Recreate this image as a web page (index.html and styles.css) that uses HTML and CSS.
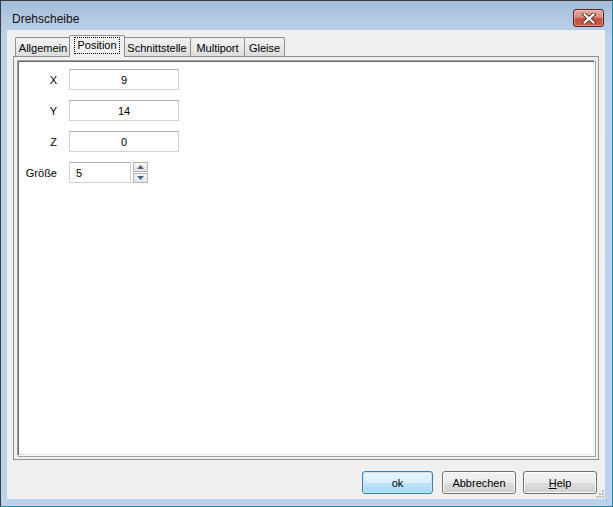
FILE: index.html
```html
<!DOCTYPE html>
<html>
<head>
<meta charset="utf-8">
<link rel="stylesheet" href="styles.css">
</head>
<body>
<div class="window">
  <div class="titlebar">
    <span class="title">Drehscheibe</span>
    <div class="close">
      <svg width="14" height="11" viewBox="0 0 14 11">
        <path d="M2.5 1.5 L11.5 9.5 M11.5 1.5 L2.5 9.5" stroke="#5a2a2a" stroke-width="4" stroke-linecap="square" fill="none"/>
        <path d="M2.5 1.5 L11.5 9.5 M11.5 1.5 L2.5 9.5" stroke="#ffffff" stroke-width="2.2" stroke-linecap="square" fill="none"/>
      </svg>
    </div>
  </div>
  <div class="client">
    <div class="tabs">
      <div class="tab t-allg">Allgemein</div>
      <div class="tab active t-pos"><span class="focus">Position</span></div>
      <div class="tab t-schn">Schnittstelle</div>
      <div class="tab t-multi">Multiport</div>
      <div class="tab t-gleise">Gleise</div>
    </div>
    <div class="panel">
      <div class="page">
        <div class="form">
          <span class="label">X</span>
          <div class="field center">9</div>
          <span class="label">Y</span>
          <div class="field center">14</div>
          <span class="label">Z</span>
          <div class="field center">0</div>
          <span class="label">Größe</span>
          <div class="spinrow">
            <div class="field small">5</div>
            <div class="spin">
              <div class="spinbtn"><svg width="7" height="4" viewBox="0 0 7 4"><path d="M0 4 L3.5 0 L7 4 Z" fill="#4d6185"/></svg></div>
              <div class="spinbtn"><svg width="7" height="4" viewBox="0 0 7 4"><path d="M0 0 L3.5 4 L7 0 Z" fill="#4d6185"/></svg></div>
            </div>
          </div>
        </div>
      </div>
    </div>
    <div class="buttons">
      <div class="btn default b-ok">ok</div>
      <div class="btn b-abbr">Abbrechen</div>
      <div class="btn b-help"><u>H</u>elp</div>
    </div>
    <div class="grip">
      <svg width="8" height="8" viewBox="0 0 8 8">
        <g fill="#bcbcbc">
          <rect x="6" y="0" width="2" height="2"/>
          <rect x="3" y="3" width="2" height="2"/><rect x="6" y="3" width="2" height="2"/>
          <rect x="0" y="6" width="2" height="2"/><rect x="3" y="6" width="2" height="2"/><rect x="6" y="6" width="2" height="2"/>
        </g>
      </svg>
    </div>
  </div>
</div>
</body>
</html>
```

FILE: styles.css
```css
* { box-sizing: border-box; }
html, body { margin: 0; padding: 0; background: #ffffff; }
body { font-family: "Liberation Sans", Arial, sans-serif; font-size: 11px; color: #000; }

.window {
  width: 613px;
  height: 507px;
  border-top: 1px solid #3b3b3b;
  border-left: 1px solid #3b3b3b;
  border-right: 1px solid #1a8aa6;
  border-bottom: 1px solid #1a8aa6;
  background: linear-gradient(to bottom, #a3bcd9 0px, #b5cbe5 20px, #bcd3ec 40px, #bad2eb 100%);
  display: flex;
  flex-direction: column;
}

.titlebar {
  height: 29px;
  display: flex;
  align-items: flex-start;
  justify-content: space-between;
  flex: none;
}
.title {
  font-size: 12px;
  line-height: 14px;
  color: #111;
  margin: 11px 0 0 11px;
}
.close {
  width: 31px;
  height: 18px;
  margin: 8px 8px 0 0;
  border: 1px solid #5e1f1a;
  border-radius: 3px;
  background: linear-gradient(to bottom, #e4a89d 0%, #d98a7c 45%, #c4503d 55%, #c9604c 100%);
  box-shadow: inset 0 0 0 1px rgba(255,255,255,0.35);
  display: flex;
  align-items: center;
  justify-content: center;
}

.client {
  position: relative;
  flex: 1;
  margin: 0 7px 7px 6px;
  background: #f0f0f0;
  padding: 5px 6px 0 6px;
  display: flex;
  flex-direction: column;
}

.tabs {
  display: flex;
  height: 21px;
  align-items: flex-end;
  padding-left: 2px;
  position: relative;
  z-index: 1;
}
.tab {
  height: 19px;
  border: 1px solid #8e8f8f;
  border-bottom: none;
  border-radius: 2px 2px 0 0;
  background: linear-gradient(to bottom, #f3f3f3 0%, #e9e9e9 50%, #dcdcdc 100%);
  display: flex;
  align-items: center;
  justify-content: center;
  padding-top: 1px;
  margin-left: -1px;
  white-space: nowrap;
}
.tab.active {
  height: 22px;
  margin-bottom: -1px;
  background: #f0f0f0;
  margin-left: -2px;
  margin-right: -1px;
  position: relative;
  z-index: 2;
  padding-top: 0;
  padding-bottom: 3px;
}
.focus {
  outline: 1px dotted #000;
  outline-offset: 0;
  padding: 0 2px;
  line-height: 15px;
}
.t-allg { width: 56px; margin-left: 0; }
.t-pos { width: 56px; }
.t-schn { width: 68px; }
.t-multi { width: 55px; }
.t-gleise { width: 41px; }

.panel {
  height: 404px;
  border: 1px solid #8e8f8f;
  background: #f0f0f0;
  padding: 3px;
  display: flex;
  flex: none;
}
.page {
  flex: 1;
  background: #ffffff;
  border-top: 1px solid #a0a0a0;
  border-left: 1px solid #a0a0a0;
  border-right: 1px solid #ffffff;
  border-bottom: 1px solid #ffffff;
  box-shadow: inset 1px 1px 0 #696969, inset -1px -1px 0 #e3e3e3, 1px 1px 0 #a0a0a0;
  padding: 8px 0 0 0;
}

.form {
  display: grid;
  grid-template-columns: 39px auto;
  column-gap: 12px;
  row-gap: 10px;
  align-items: center;
  justify-items: start;
}
.label { justify-self: end; }
.field {
  width: 110px;
  height: 21px;
  border: 1px solid #cfd3d8;
  border-top-color: #abadb3;
  background: #fff;
  display: flex;
  align-items: center;
  padding: 0 6px;
}
.field.center { justify-content: center; }
.field.small { width: 62px; }
.spinrow { display: flex; align-items: center; gap: 2px; }
.spin { display: flex; flex-direction: column; gap: 1px; }
.spinbtn {
  width: 15px;
  height: 10px;
  border: 1px solid #b4b4b4;
  background: linear-gradient(to bottom, #f6f6f6, #e4e4e4);
  display: flex;
  align-items: center;
  justify-content: center;
}

.buttons {
  display: flex;
  justify-content: flex-end;
  margin-top: 11px;
  padding-right: 2px;
}
.btn {
  height: 23px;
  border: 1px solid #707070;
  border-radius: 3px;
  background: linear-gradient(to bottom, #f2f2f2 0%, #ebebeb 50%, #dddddd 51%, #cfcfcf 100%);
  box-shadow: inset 0 0 0 1px #fcfcfc;
  display: flex;
  align-items: center;
  justify-content: center;
}
.btn.default {
  border-color: #3c7fb1;
  background: linear-gradient(to bottom, #eaf6fd 0%, #d9f0fc 50%, #bee6fd 51%, #a7d9f5 100%);
  box-shadow: inset 0 0 0 1px #c4e5f6;
}
.b-ok { width: 71px; }
.b-abbr { width: 74px; margin-left: 9px; }
.b-help { width: 74px; margin-left: 7px; }

.grip {
  position: absolute;
  right: 1px;
  bottom: 1px;
  width: 8px;
  height: 8px;
  display: flex;
}
```
